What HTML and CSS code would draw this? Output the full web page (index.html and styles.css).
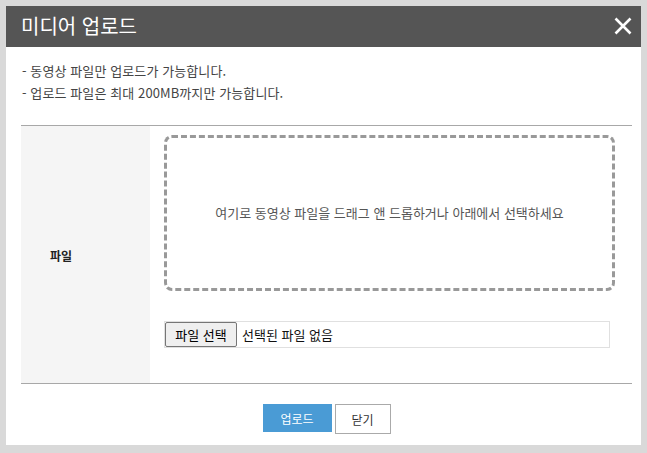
FILE: index.html
```html
<!DOCTYPE html>
<html lang="ko">
<head>
<meta charset="utf-8">
<link rel="stylesheet" href="styles.css">
</head>
<body>
<div class="modal">
  <div class="modal-header">
    <h1 class="modal-title">미디어 업로드</h1>
    <button class="close-btn" aria-label="닫기">
      <svg width="18" height="18" viewBox="0 0 18 18"><path d="M1.5 1.5 L16.5 16.5 M16.5 1.5 L1.5 16.5" stroke="#fff" stroke-width="2.6" fill="none"/></svg>
    </button>
  </div>
  <div class="modal-body">
    <ul class="notes">
      <li>- 동영상 파일만 업로드가 가능합니다.</li>
      <li>- 업로드 파일은 최대 200MB까지만 가능합니다.</li>
    </ul>
    <div class="form-row">
      <div class="form-label">파일</div>
      <div class="form-field">
        <div class="dropzone">여기로 동영상 파일을 드래그 앤 드롭하거나 아래에서 선택하세요</div>
        <div class="file-input">
          <span class="file-btn">파일 선택</span>
          <span class="file-name">선택된 파일 없음</span>
        </div>
      </div>
    </div>
    <div class="actions">
      <button class="btn btn-primary">업로드</button>
      <button class="btn btn-default">닫기</button>
    </div>
  </div>
</div>
</body>
</html>
```

FILE: styles.css
```css
* { box-sizing: border-box; }
html, body { margin: 0; padding: 0; }
body {
  background: #d9d9d9;
  font-family: "Noto Sans CJK KR", "Noto Sans", sans-serif;
  color: #333;
  padding: 6px;
  height: 453px;
}
.modal {
  width: 635px;
  height: 439px;
  background: #fff;
  display: flex;
  flex-direction: column;
}
.modal-header {
  height: 41px;
  background: #555555;
  display: flex;
  align-items: center;
  justify-content: space-between;
  padding: 0 9px 0 15px;
}
.modal-title {
  margin: 0;
  font-size: 20px;
  font-weight: 400;
  color: #fff;
  line-height: 28px;
  margin-top: -2px;
}
.close-btn {
  background: none;
  border: 0;
  padding: 0;
  width: 18px;
  height: 18px;
  display: flex;
  margin-top: -2px;
}
.modal-body {
  padding: 13px 9px 0 15px;
  display: flex;
  flex-direction: column;
}
.notes {
  list-style: none;
  margin: 0;
  padding: 0 0 0 1px;
  font-size: 13px;
  line-height: 22px;
  color: #444;
  letter-spacing: 0.1px;
}
.form-row {
  margin-top: 21px;
  border-top: 1px solid #a8a8a8;
  border-bottom: 1px solid #a8a8a8;
  display: flex;
}
.form-label {
  width: 129px;
  background: #f5f5f5;
  display: flex;
  align-items: center;
  padding-left: 29px;
  padding-top: 2px;
  font-size: 12px;
  font-weight: 700;
  color: #222;
}
.form-field {
  flex: 1;
  padding: 9px 17px 35px 14px;
}
.dropzone {
  height: 156px;
  border: 3px dashed #999;
  border-radius: 8px;
  display: flex;
  align-items: center;
  justify-content: center;
  font-size: 13px;
  color: #555;
  padding-bottom: 2px;
}
.file-input {
  margin-top: 30px;
  width: 446px;
  height: 27px;
  border: 1px solid #e0e0e0;
  display: flex;
  align-items: center;
  font-size: 13px;
}
.file-btn {
  height: 25px;
  width: 72px;
  border: 1px solid #767676;
  border-radius: 2px;
  background: #efefef;
  display: flex;
  align-items: center;
  justify-content: center;
  color: #000;
  font-size: 13px;
}
.file-name {
  margin-left: 5px;
  color: #111;
}
.actions {
  display: flex;
  justify-content: center;
  align-items: flex-start;
  gap: 3px;
  margin-top: 20px;
}
.btn {
  font-family: inherit;
  font-size: 12px;
  padding: 0;
  cursor: pointer;
}
.btn-primary {
  width: 69px;
  height: 28px;
  background: #4a9bd5;
  color: #fff;
  border: 0;
}
.btn-default {
  width: 56px;
  height: 30px;
  background: #fff;
  border: 1px solid #aaa;
  color: #333;
}
```
